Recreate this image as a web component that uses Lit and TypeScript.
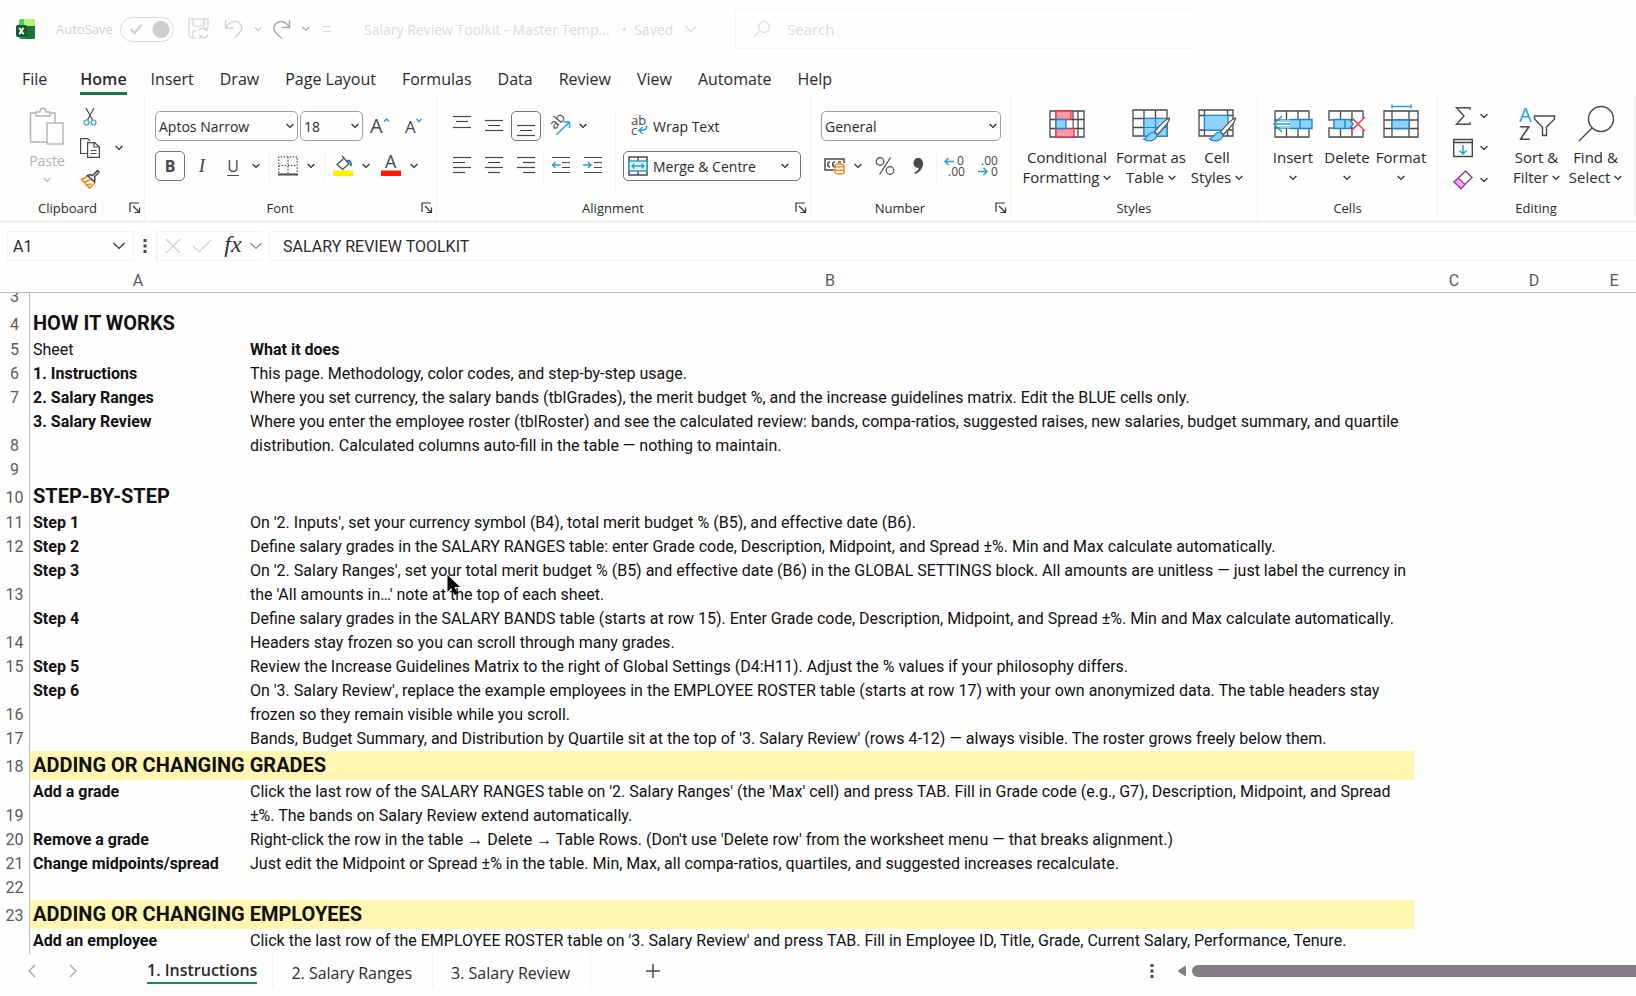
import { LitElement, html, css, svg, nothing } from "lit";
import { customElement, state } from "lit/decorators.js";
import { classMap } from "lit/directives/class-map.js";

interface SheetRow {
  n: number;
  a?: string;
  b?: string;
  kind?: "section" | "band" | "head" | "tallrow";
}

const ROWS: SheetRow[] = [
  { n: 3 },
  { n: 4, a: "HOW IT WORKS", kind: "section" },
  { n: 5, a: "Sheet", b: "What it does", kind: "head" },
  { n: 6, a: "1. Instructions", b: "This page. Methodology, color codes, and step-by-step usage." },
  { n: 7, a: "2. Salary Ranges", b: "Where you set currency, the salary bands (tblGrades), the merit budget %, and the increase guidelines matrix. Edit the BLUE cells only." },
  { n: 8, a: "3. Salary Review", b: "Where you enter the employee roster (tblRoster) and see the calculated review: bands, compa-ratios, suggested raises, new salaries, budget summary, and quartile distribution. Calculated columns auto-fill in the table — nothing to maintain." },
  { n: 9 },
  { n: 10, a: "STEP-BY-STEP", kind: "section" },
  { n: 11, a: "Step 1", b: "On '2. Inputs', set your currency symbol (B4), total merit budget % (B5), and effective date (B6)." },
  { n: 12, a: "Step 2", b: "Define salary grades in the SALARY RANGES table: enter Grade code, Description, Midpoint, and Spread ±%. Min and Max calculate automatically." },
  { n: 13, a: "Step 3", b: "On '2. Salary Ranges', set your total merit budget % (B5) and effective date (B6) in the GLOBAL SETTINGS block. All amounts are unitless — just label the currency in the 'All amounts in…' note at the top of each sheet." },
  { n: 14, a: "Step 4", b: "Define salary grades in the SALARY BANDS table (starts at row 15). Enter Grade code, Description, Midpoint, and Spread ±%. Min and Max calculate automatically. Headers stay frozen so you can scroll through many grades." },
  { n: 15, a: "Step 5", b: "Review the Increase Guidelines Matrix to the right of Global Settings (D4:H11). Adjust the % values if your philosophy differs." },
  { n: 16, a: "Step 6", b: "On '3. Salary Review', replace the example employees in the EMPLOYEE ROSTER table (starts at row 17) with your own anonymized data. The table headers stay frozen so they remain visible while you scroll." },
  { n: 17, b: "Bands, Budget Summary, and Distribution by Quartile sit at the top of '3. Salary Review' (rows 4-12) — always visible. The roster grows freely below them." },
  { n: 18, a: "ADDING OR CHANGING GRADES", kind: "band" },
  { n: 19, a: "Add a grade", b: "Click the last row of the SALARY RANGES table on '2. Salary Ranges' (the 'Max' cell) and press TAB. Fill in Grade code (e.g., G7), Description, Midpoint, and Spread ±%. The bands on Salary Review extend automatically." },
  { n: 20, a: "Remove a grade", b: "Right-click the row in the table → Delete → Table Rows. (Don't use 'Delete row' from the worksheet menu — that breaks alignment.)" },
  { n: 21, a: "Change midpoints/spread", b: "Just edit the Midpoint or Spread ±% in the table. Min, Max, all compa-ratios, quartiles, and suggested increases recalculate." },
  { n: 22 },
  { n: 23, a: "ADDING OR CHANGING EMPLOYEES", kind: "band" },
  { n: 24, a: "Add an employee", b: "Click the last row of the EMPLOYEE ROSTER table on '3. Salary Review' and press TAB. Fill in Employee ID, Title, Grade, Current Salary, Performance, Tenure.", kind: "tallrow" },
];

const icon = (w: number, h: number, body: unknown) =>
  html`<svg width=${w} height=${h} viewBox="0 0 ${w} ${h}" fill="none" stroke="#4a474b" stroke-width="1.2" aria-hidden="true">${body}</svg>`;

const chev = (w = 8) =>
  w > 8
    ? html`<svg class="chev" width="12" height="8" viewBox="0 0 12 8" fill="none" stroke="currentColor" stroke-width="1.1" aria-hidden="true"><path d="M.5 1 6 6.500 11.500 1" /></svg>`
    : html`<svg class="chev" width="8" height="6" viewBox="0 0 8 6" fill="none" stroke="currentColor" stroke-width="1.2" aria-hidden="true"><path d="M.6 1 4 4.400 7.400 1" /></svg>`;

const launcher = icon(12, 12, svg`<path stroke="#333" d="M1 10V1h9M4 4l6 6M10.500 5.500v5h-5" />`);

const excel = html`<svg width="20" height="22" viewBox="0 0 20 22" aria-hidden="true">
  <path fill="#4fd06a" d="M5 1h7v8H3V3a2 2 0 0 1 2-2z" /><path fill="#b8f080" d="M8 1h9a2 2 0 0 1 2 2v6H8z" />
  <path fill="#1f9d4d" d="M3 8h16v11a2 2 0 0 1-2 2H5a2 2 0 0 1-2-2z" /><path fill="#1b7237" d="M10 8h9v11a2 2 0 0 1-2 2h-7z" />
  <rect y="7" width="11" height="12" rx="2" fill="#125c2c" /><path stroke="#fff" stroke-width="1.9" d="M3.2 9.8l4.4 6.4M7.6 9.8l-4.4 6.4" />
</svg>`;

const alignIcon = (lines: number[][]) =>
  icon(20, 20, svg`${lines.map(([x1, x2, y]) => svg`<path d="M${x1} ${y}.5H${x2}" />`)}`);

const I = {
  save: icon(22, 22, svg`<g stroke="#d3d0d4"><path d="M9 20H3.5L1 17.500V1h19v8M5 1v7h11V1M5 20v-7h4M11 13a4.500 4.500 0 0 1 8-1v-3M20 16a4.500 4.500 0 0 1-8 2v3M19 12h-3M12 18h3" /></g>`),
  undo: icon(20, 22, svg`<path stroke="#d3d0d4" stroke-width="1.400" d="M1.500 2v8h8M2 9.500C5 4 11 1.500 15.500 5c4 4 2 8-1 11l-4 4" />`),
  redo: icon(20, 22, svg`<path stroke="#a9a6aa" stroke-width="1.500" d="M17.500 2v7.500H10M17 9C14 3 8 2 4 5.500c-4 4-2 8 1 10.500l5 4.500" />`),
  search: icon(18, 18, svg`<path stroke="#dddadd" d="M6 12l-5 5M16.500 7a5.500 5.500 0 1 1-11 0 5.500 5.500 0 0 1 11 0z" />`),
  paste: icon(36, 40, svg`<g stroke="#b4b1b5" stroke-width="1.400"><path d="M18 35H1.500V6H8M20 6h6v10" /><path d="M7 9V5h4c0-5 6-5 6 0h4v4z" fill="#fff" /><rect x="18" y="16" width="16" height="21" fill="#fff" /></g>`),
  cut: icon(14, 20, svg`<path d="M3 1l6.500 12M11 1L4.500 13" /><circle cx="3.500" cy="15.500" r="2.500" stroke="#2a9fd8" /><circle cx="10.500" cy="15.500" r="2.500" stroke="#2a9fd8" />`),
  copy: icon(20, 20, svg`<path d="M7 15.500H.6V.6h7L10 3M7.600 4.600h7L19.400 9v10.400H7.600zM14 4.600V9h5M10.500 12.500h6M10.500 15.500h6" />`),
  painter: icon(20, 20, svg`<path stroke="#f08a1c" stroke-width="1.600" fill="#fff" d="M8 7L1.500 10.500l8 8.500 5.500-5.500zM4 13.500l7-3M7 16l4-1" /><path stroke-width="1.500" fill="#fff" d="M7.500 6.500l3-1 2 1L17.500 1.500l1.500 1.500-4.500 5 .5 2-.5 2.500z" />`),
  grow: icon(20, 20, svg`<text x="0" y="17" font-size="20" class="g">A</text><path stroke="#2a9fd8" stroke-width="1.500" d="M14 5.500L16.500 3 19 5.500" />`),
  shrink: icon(18, 20, svg`<text x="2" y="17" font-size="17" class="g">A</text><path stroke="#2a9fd8" stroke-width="1.500" d="M13.500 3L16 5.500 18.500 3" />`),
  borders: icon(20, 20, svg`<path stroke-dasharray="1.500 1.500" d="M.8 17V.8h18.400V17M10 1v16M1 9.500h18" /><path stroke-width="2" d="M0 18.500h20" />`),
  fill: icon(20, 22, svg`<path fill="#fff" d="M4 9.500L11 3l5 6-6.500 5.500zM11 3L9 .8" /><path stroke="#1b7fd0" stroke-width="2" d="M14 6c3-1 4 1 4 5" /><path fill="#fff100" stroke="none" d="M0 15.500h20V21H0z" />`),
  color: icon(20, 22, svg`<text x="4" y="13" font-size="18" class="g">A</text><path fill="#ff1a00" stroke="none" d="M0 15.500h20V21H0z" />`),
  top: alignIcon([[1, 19, 0], [4, 16, 5], [1, 19, 11]]),
  middle: alignIcon([[1, 19, 4], [4, 16, 9], [1, 19, 14]]),
  bottom: alignIcon([[1, 19, 9], [4, 16, 14], [1, 19, 19]]),
  left: alignIcon([[1, 19, 1], [1, 13, 6], [1, 19, 11], [1, 13, 16]]),
  center: alignIcon([[1, 19, 1], [4, 16, 6], [1, 19, 11], [4, 16, 16]]),
  right: alignIcon([[1, 19, 1], [7, 19, 6], [1, 19, 11], [7, 19, 16]]),
  outdent: icon(20, 20, svg`<path d="M1 1.500h18M11 6.500h8M11 11.500h8M1 16.500h18" /><path stroke="#2a9fd8" stroke-width="1.500" d="M1.500 9h8M4.500 6l-3 3 3 3" />`),
  indent: icon(20, 20, svg`<path d="M1 1.500h18M11 6.500h8M11 11.500h8M1 16.500h18" /><path stroke="#2a9fd8" stroke-width="1.500" d="M0 9h8M5 6l3 3-3 3" />`),
  orient: icon(22, 22, svg`<text x="0" y="0" font-size="14" class="g" transform="translate(6 15) rotate(-48)">ab</text><path stroke="#2a9fd8" stroke-width="1.500" d="M7.500 19.500L20 7.500M14.500 7H20.500v6" />`),
  wrap: icon(18, 20, svg`<text x="1" y="9" font-size="13" class="g">ab</text><text x="1" y="19" font-size="13" class="g">c</text><path stroke="#2a9fd8" stroke-width="1.500" d="M16.500 9.500c1 4-2 5-7 5M12.500 11l-3.500 3.500 3.500 3.500" />`),
  merge: icon(20, 20, svg`<path stroke-width="1.500" d="M1 1h18v18H1zM10 1v4M10 15v4" /><path fill="#e8f5fd" stroke="#2a9fd8" stroke-width="1.500" d="M1 5h18v10H1z" /><path stroke="#2a9fd8" stroke-width="1.400" d="M4 10h12M6.500 7.500L4 10l2.500 2.500M13.500 7.500L16 10l-2.500 2.500" />`),
  money: icon(22, 20, svg`<path stroke-width="1.500" d="M10 14H1V3h19v4M6 6C3 5.500 3 11 6 11M11 6C8 5.500 8 11 11 11M14 6h3" /><path fill="#fff" stroke="#ef8a1d" stroke-width="1.400" d="M11 9.500c0-2 9-2 9 0v7c0 2-9 2-9 0zM11 9.500c0 2 9 2 9 0M11 13c0 2 9 2 9 0" />`),
  percent: icon(20, 20, svg`<circle cx="5" cy="5.500" r="3.800" /><circle cx="15" cy="14.500" r="3.800" /><path d="M15.500 1.500l-11 17" />`),
  comma: icon(12, 18, svg`<path fill="#4a474b" stroke="none" d="M6 1c3 0 5 2 5 5.500C11 11 8 15 3 17l-.8-1.200C5 14.500 6.500 13 7 10.800 4 11.500 1.500 9 1.500 6 1.500 3 3.500 1 6 1z" />`),
  incDec: icon(22, 22, svg`<path stroke="#2a9fd8" stroke-width="1.500" d="M1 6.500h9M4.500 3L1 6.500 4.500 10" /><text x="13" y="10" font-size="12" class="g">0</text><text x="4" y="21" font-size="12" class="g">.00</text>`),
  decDec: icon(22, 22, svg`<text x="4" y="10" font-size="12" class="g">.00</text><text x="14" y="21" font-size="12" class="g">0</text><path stroke="#2a9fd8" stroke-width="1.500" d="M1 16.500h9M6.500 13l3.500 3.500L6.500 20" />`),
  cond: icon(36, 34, svg`<path stroke-width="1.300" d="M1 4h34v26H1zM1 12.500h34M1 21.500h34M7 4v26M29 4v26M24 4v26" /><path fill="#fff" stroke="none" d="M17.600 13.200h5.700v7.600h-5.700z" /><path fill="#ff9aa6" stroke="#e8323c" stroke-width="1.300" d="M7 4h15v8.500H7zM7 21.500h18V30H7z" /><path fill="#8fd2fb" stroke="#1f86d1" stroke-width="1.300" d="M7 12.500h10v9H7z" />`),
  table: icon(40, 36, svg`<path stroke-width="1.300" d="M2 4h34v26H2zM2 12.500h34M2 21.500h34M13 4v26M24.500 4v26" /><path fill="#8fd2fb" stroke="#1f86d1" d="M13 12.500h23V30H13zM13 21.500h23M24.500 12.500V30" /><path fill="#fff" d="M38.500 12c-4 1-11 9-15 14l3 2.500c5-5 12-12 12-16.500z" /><path fill="#8fd2fb" stroke="#1f86d1" d="M23 26c-5-.5-5 5-10.500 7 5 3.500 12.500 2 13.500-4z" />`),
  cell: icon(40, 36, svg`<path stroke-width="1.300" d="M2 4h34v26H2zM2 9.500h34M2 24h34M7.500 4v26M30.500 4v26" /><path fill="#8fd2fb" stroke="#1f86d1" d="M7.500 9.500h23.500V24H7.500z" /><path fill="#fff" d="M38.500 12c-4 1-11 9-15 14l3 2.500c5-5 12-12 12-16.500z" /><path fill="#8fd2fb" stroke="#1f86d1" d="M23 26c-5-.5-5 5-10.500 7 5 3.500 12.500 2 13.500-4z" />`),
  insert: icon(42, 40, svg`<path stroke-width="1.300" d="M3 7h34v26H3zM3 16h34M3 24h34M14.500 7v9M26 7v9M14.500 24v9M26 24v9" /><path fill="#8fd2fb" stroke="#1f86d1" stroke-width="1.400" d="M17 15.500h23v9H17M28 15.500v9" /><path fill="#8fd2fb" stroke="none" d="M8 15.500h10v9H8z" /><path stroke="#fff" stroke-width="4" d="M2 20h16" /><path stroke="#2a9fd8" stroke-width="1.600" d="M2 20h16M10 12l-8 8 8 8" />`),
  remove: icon(42, 40, svg`<path stroke-width="1.300" d="M3 7h34v26H3zM3 16h34M3 24h34M14.500 7v9M26 7v9M14.500 24v9M26 24v9" /><path fill="#fff" stroke="none" d="M0 16.700h8v6.600H0zM27 14h12v12H27z" /><path fill="#8fd2fb" stroke="#1f86d1" stroke-width="1.400" d="M8 15.500h16l3 4.500-3 4.500H8zM19 15.500v9" /><path stroke="#e8454c" stroke-width="1.600" d="M25 13l14 14M39 13L25 27" />`),
  format: icon(42, 40, svg`<path stroke-width="1.300" d="M4 7h34v26H4zM4 16h34M4 24.500h34M12 7v26M29 7v26" /><path fill="#8fd2fb" stroke="#1f86d1" stroke-width="1.400" d="M12 16h17v8.500H12z" /><path stroke="#2a9fd8" stroke-width="1.400" d="M12 2.500h19M12 .5v4M31 .5v4" />`),
  sum: icon(20, 20, svg`<path stroke-width="1.400" d="M17 4V1.800H3.500L11 10l-7.500 8.200H17V16" />`),
  down: icon(20, 20, svg`<path stroke-width="1.400" d="M.7 1.500h18.600v17H.7zM.7 4.500h18.600" /><path stroke="#2a9fd8" stroke-width="1.500" d="M10 7v9M6.500 12.500L10 16l3.500-3.500" />`),
  erase: icon(20, 20, svg`<path fill="#fff" d="M12.500 1L19 7.500 8 18.500 1 12z" /><path fill="#f3a8f2" stroke="#a347a8" stroke-width="1.300" d="M5.500 8L12 14.500 8 18.500 1 12z" /><path stroke="#a347a8" stroke-width="1" d="M12.500 1L19 7.500 8 18.500 1 12z" />`),
  sort: icon(36, 36, svg`<text x="0" y="16" font-size="20" class="b">A</text><text x="0" y="34" font-size="20" class="g">Z</text><path stroke-width="1.400" d="M15.500 10h20v3l-8 8v8.500h-4V21l-8-8z" />`),
  find: icon(38, 38, svg`<circle cx="24" cy="14" r="12.500" stroke-width="1.400" /><path stroke-width="1.400" d="M15 23L2 36" />`),
};

@customElement("ribbon-group")
class RibbonGroup extends LitElement {
  static properties = { label: {}, launch: { type: Boolean } };
  declare label: string;
  declare launch: boolean;
  static styles = css`
    :host { display: flex; flex-direction: column; box-sizing: border-box; flex: none; border-right: 1px solid #f3f0f4; }
    .body { flex: 1; display: flex; align-items: flex-start; }
    footer { display: flex; align-items: center; height: 24px; padding-left: var(--label-inset, 0); font-size: 13px; text-align: center; color: #2b292c; }
    .title { flex: 1; }
    button { all: unset; display: flex; width: 15px; padding-left: 6px; }
  `;
  render() {
    return html`<div class="body"><slot></slot></div>
      <footer><span class="title">${this.label}</span>${this.launch ? html`<button aria-label="${this.label} settings">${launcher}</button>` : nothing}</footer>`;
  }
}

@customElement("app-root")
class AppRoot extends LitElement {
  @state() tab = "Home";
  @state() sheet = 0;

  static styles = css`
    :host { display: flex; flex-direction: column; height: 100vh; overflow: hidden; position: relative; background: #fefefe; color: #2b292c; font-family: "Open Sans", "Noto Sans", sans-serif; font-size: 14px; }
    * { box-sizing: border-box; }
    button, select, input { font: inherit; color: inherit; background: none; border: 0; padding: 0; margin: 0; }
    button { display: flex; align-items: center; justify-content: center; }
    svg { display: block; flex: none; overflow: visible; }
    .g { fill: #4a474b; stroke: none; }
    .b { fill: #2a9fd8; stroke: none; }

    .titlebar { display: flex; align-items: center; height: 58px; padding-left: 16px; color: #d3d0d4; font-size: 13px; }
    .titlebar .auto { margin-left: 20px; width: 64px; }
    .toggle { appearance: none; width: 54px; height: 25px; border: 1px solid #dddadd; border-radius: 13px; background: radial-gradient(circle at 40px 50%, #d0cdd1 8px, transparent 9px); }
    .togglebox { display: grid; align-items: center; }
    .togglebox > * { grid-area: 1 / 1; }
    .togglebox svg { margin-left: 9px; }
    .quick { display: flex; align-items: center; gap: 10px; margin-left: 14px; width: 162px; }
    .quick .undo { margin-left: 4px; }
    .doc { margin-left: 14px; width: 371px; display: flex; align-items: center; gap: 12px; font-size: 14px; color: #dddadd; white-space: pre; }
    .redo { color: #a9a6aa; }
    .search { display: flex; align-items: center; gap: 16px; flex: 0 1 456px; height: 40px; padding-left: 17px; border: 1px solid #f6f4f6; border-width: 1px 0 1px 1px; font-size: 15px; }
    .search input { min-width: 0; flex: 1; outline: 0; }
    .search input::placeholder { color: #dddadd; opacity: 1; }

    .tabs { display: flex; height: 38px; padding-left: 9px; font-size: 16px; }
    .tabs button { align-items: flex-start; height: 37px; padding: 0 13px; }
    .tabs span { display: block; padding-top: 8px; height: 37px; line-height: 26px; border-bottom: 3px solid transparent; }
    .tabs .on { padding: 0 11px 0 20px; }
    .tabs .on span { font-weight: 600; border-color: #1b7a43; }

    .ribbon { display: flex; height: 126px; padding-bottom: 1px; border-bottom: 1px solid #ebe8ec; }
    .stack { display: flex; flex-direction: column; gap: 10px; padding-top: 15px; }
    .row { display: flex; align-items: center; gap: 2px; height: 30px; }
    .ib { width: 30px; height: 30px; }
    .split { display: flex; align-items: center; height: 30px; }
    .split button { width: 28px; height: 30px; }
    .split button + button { width: 18px; }
    .boxed { border: 1px solid #77747a; border-radius: 5px; }
    .sep { width: 1px; height: 32px; background: #f3f0f4; }
    .wide .sep { margin: 0 2px; }
    .loose { gap: 3px; }
    .bold { font-weight: 700; font-size: 16px; color: #4a474b; }
    .ital { font-family: "Liberation Serif", serif; font-style: italic; font-size: 19px; color: #4a474b; }
    .under { text-decoration: underline; text-underline-offset: 3px; font-size: 16px; color: #4a474b; }

    .pick { display: grid; align-items: center; height: 30px; border: 1px solid #a19ea3; border-radius: 5px; }
    .pick > * { grid-area: 1 / 1; }
    .pick select { appearance: none; height: 28px; padding-left: 3px; font-size: 14px; outline: 0; }
    .pick svg { justify-self: end; margin-right: 3px; pointer-events: none; }
    .font { width: 143px; }
    .size { width: 63px; }
    .num { width: 180px; }

    .clip { width: 145px; --label-inset: 12px; }
    .clipin { display: flex; padding: 11px 0 0 25px; gap: 11px; }
    .paste { flex-direction: column; color: #b4b1b5; width: 44px; font-size: 14px; justify-content: flex-start; }
    .paste span { line-height: 20px; padding: 4px 0 6px; }
    .cliprow { display: flex; flex-direction: column; gap: 11px; }
    .cliprow div { display: flex; align-items: center; gap: 14px; height: 20px; }
    .cliprow button { width: 20px; }
    .cliprow button + button { width: 10px; }
    .fontg { width: 292px; }
    .aln { width: 374px; }
    .numg { width: 200px; }
    .sty { width: 247px; }
    .cel { width: 180px; }
    .edi { width: 197px; }
    .pad { padding-left: 10px; }
    .aln .stack + .tall + .stack { padding-left: 7px; }
    .tall { width: 1px; height: 80px; margin: 14px 0 0 7px; background: #f3f0f4; }
    .wraptext { gap: 5px; padding-left: 7px; height: 30px; }
    .mergebtn { width: 178px; height: 30px; padding: 0 11px 0 4px; gap: 5px; }
    .mergebtn .txt { flex: 1; text-align: left; }

    .big { display: flex; padding: 7px 0 0 7px; }
    .big button { flex-direction: column; justify-content: flex-start; font-size: 15px; line-height: 20px; }
    .big .pic { display: flex; align-items: center; height: 44px; padding-bottom: 2px; }
    .big .chev { display: inline-block; vertical-align: 2px; }
    .b1 { width: 98px; }
    .b2 { width: 70px; }
    .b3 { width: 62px; }
    .b4 { width: 54px; }
    .b5 { width: 59px; }
    .b4 .chev { margin-top: 8px; }
    .cells { padding-left: 8px; }
    .trio { display: flex; flex-direction: column; gap: 2px; padding: 5px 16px 0 11px; }
    .trio .split button + button { width: 14px; }
    .finders { padding-left: 0; }

    .fbar { display: flex; align-items: center; height: 48px; padding: 0 0 0 7px; font-size: 15px; }
    .fbar > * { height: 30px; border: solid #f5f2f6; border-width: 1px 0 1px 1px; }
    .namebox { display: flex; align-items: center; width: 126px; padding: 0 7px 0 5px; }
    .namebox input { width: 100px; font-family: Roboto, sans-serif; font-size: 16px; }
    .fbar .dots { width: 24px; border-width: 0 1px; }
    .fxs { display: flex; align-items: center; width: 106px; color: #8a878b; }
    .fxs button { width: 29px; }
    .fxs .fx { font-family: "Liberation Serif", serif; font-style: italic; font-size: 24px; color: #333; width: 34px; padding-bottom: 4px; }
    .fxs .more { width: 12px; }
    .formula { flex: 1; min-width: 0; margin-left: 6px; }
    .formula input { width: 100%; height: 28px; padding-left: 13px; font-family: Roboto, sans-serif; font-size: 16px; outline: 0; }

    .grid { table-layout: fixed; border-collapse: separate; border-spacing: 0; width: calc(100% + 18px); font-family: Roboto, "Open Sans", sans-serif; }
    .c0 { width: 30px; }
    .ca { width: 216px; }
    .cn { width: 80px; }
    .heads th { height: 22px; padding: 0; font: 400 16px/22px Roboto, sans-serif; color: #5c595e; }
    .headwrap { flex: none; overflow: hidden; border-bottom: 1px solid #bcb9be; }
    .pane { flex: 1; min-height: 0; overflow: hidden; }
    .pane .grid { margin-top: -8px; }
    .pane tr { height: 24px; }
    .pane th { padding: 0; font: 400 16px/24px Roboto, sans-serif; color: #5c595e; vertical-align: bottom; text-align: center; border-right: 1px solid #bcb9be; white-space: nowrap; }
    .pane td { padding: 0 4px; font-size: 16px; line-height: 24px; color: #111; vertical-align: top; }
    .pane td.a { padding-left: 3px; font-weight: 700; white-space: nowrap; }
    .pane .head td.a { font-weight: 400; }
    .pane .head td.b { font-weight: 700; }
    .pane tr.section, .pane tr.band { height: 29px; }
    .pane tr.tallrow { height: 48px; }
    .pane .section td, .pane .band td { font-size: 20px; line-height: 29px; font-weight: 700; }
    .pane .section th, .pane .band th { line-height: 26px; }
    .pane .band td.a { background: #fff7b2; }
    .keep { white-space: nowrap; }

    .sheets { display: flex; align-items: center; height: 42px; flex: none; font-size: 16px; padding: 0 0 8px 27px; }
    .sheets .nav { width: 41px; justify-content: flex-start; color: #aaa7ab; }
    .sheets .tab { height: 34px; padding: 3px 20px 0 18px; border-right: 1px solid #f3f0f4; }
    .sheets .tab.on { padding: 0 15px 0 38px; }
    .sheets .on span { font-weight: 600; border-bottom: 2px solid #1c8a4c; line-height: 24px; }
    .sheets .add { width: 124px; }
    .sheets .spring { flex: 1; }
    .hbar { display: flex; align-items: center; gap: 6px; width: 486px; }
    .hbar .arrow { margin-left: 18px; }
    .hbar .thumb { flex: 1; height: 12px; border-radius: 6px 0 0 6px; background: #837e86; }
    .cursor { position: absolute; left: 447px; top: 575px; }
  `;

  private split(i: unknown, label: string) {
    return html`<div class="split"><button aria-label=${label}>${i}</button><button aria-label="${label} options">${chev()}</button></div>`;
  }
  private ib(i: unknown, label: string, cls = "") {
    return html`<button class="ib ${cls}" aria-label=${label}>${i}</button>`;
  }
  private pick(cls: string, label: string, value: string) {
    return html`<label class="pick ${cls}"><select aria-label=${label}><option>${value}</option></select>${chev()}</label>`;
  }

  private titlebar() {
    return html`<header class="titlebar">
      ${excel}<label class="auto" for="auto">AutoSave</label>
      <span class="togglebox"><input id="auto" class="toggle" type="checkbox" checked />
        ${icon(14, 12, svg`<path stroke="#d0cdd1" stroke-width="2" d="M1.500 6l4 4 7-8" />`)}</span>
      <div class="quick">
        <button aria-label="Save">${I.save}</button><button class="undo" aria-label="Undo">${I.undo}</button><button aria-label="Undo options">${chev()}</button>
        <button class="redo" aria-label="Redo">${I.redo}</button><button class="redo" aria-label="Redo options">${chev()}</button>
        <button aria-label="Customise toolbar">${icon(14, 10, svg`<path stroke="#dddadd" d="M3 2.500h8M3 7.500h8" />`)}</button>
      </div>
      <div class="doc"><span>Salary Review Toolkit - Master Temp...</span><span>•  Saved</span>${chev(12)}</div>
      <label class="search">${I.search}<input type="search" aria-label="Search" placeholder="Search" /></label>
    </header>`;
  }

  private ribbon() {
    const tabs = ["File", "Home", "Insert", "Draw", "Page Layout", "Formulas", "Data", "Review", "View", "Automate", "Help"];
    return html`<nav class="tabs">
        ${tabs.map((t) => html`<button class=${classMap({ on: t === this.tab })} @click=${() => (this.tab = t)}><span>${t}</span></button>`)}
      </nav>
      <section class="ribbon">
        <ribbon-group class="clip" label="Clipboard" launch>
          <div class="clipin">
            <button class="paste">${I.paste}<span>Paste</span>${chev()}</button>
            <div class="cliprow">
              <div><button aria-label="Cut">${I.cut}</button></div>
              <div><button aria-label="Copy">${I.copy}</button><button aria-label="Copy options">${chev()}</button></div>
              <div><button aria-label="Format painter">${I.painter}</button></div>
            </div>
          </div>
        </ribbon-group>
        <ribbon-group class="fontg" label="Font" launch>
          <div class="stack pad">
            <div class="row">${this.pick("font", "Font", "Aptos Narrow")}${this.pick("size", "Font size", "18")}${this.ib(I.grow, "Grow font")}${this.ib(I.shrink, "Shrink font")}</div>
            <div class="row wide">
              <button class="ib boxed bold">B</button><button class="ib ital">I</button>
              ${this.split(html`<span class="under">U</span>`, "Underline")}<i class="sep"></i>
              ${this.split(I.borders, "Borders")}<i class="sep"></i>${this.split(I.fill, "Fill colour")}${this.split(I.color, "Font colour")}
            </div>
          </div>
        </ribbon-group>
        <ribbon-group class="aln" label="Alignment" launch>
          <div class="stack pad">
            <div class="row">${this.ib(I.top, "Top align")}${this.ib(I.middle, "Middle align")}${this.ib(I.bottom, "Bottom align", "boxed")}<i class="sep"></i>${this.split(I.orient, "Orientation")}</div>
            <div class="row">${this.ib(I.left, "Align left")}${this.ib(I.center, "Centre")}${this.ib(I.right, "Align right")}<i class="sep"></i>${this.ib(I.outdent, "Decrease indent")}${this.ib(I.indent, "Increase indent")}</div>
          </div>
          <i class="tall"></i>
          <div class="stack">
            <div class="row"><button class="wraptext">${I.wrap}<span>Wrap Text</span></button></div>
            <div class="row"><button class="mergebtn boxed">${I.merge}<span class="txt">Merge &amp; Centre</span>${chev()}</button></div>
          </div>
        </ribbon-group>
        <ribbon-group class="numg" label="Number" launch>
          <div class="stack pad">
            <div class="row">${this.pick("num", "Number format", "General")}</div>
            <div class="row loose">${this.split(I.money, "Accounting format")}${this.ib(I.percent, "Percent")}${this.ib(I.comma, "Comma style")}<i class="sep"></i>${this.ib(I.incDec, "Increase decimal")}${this.ib(I.decDec, "Decrease decimal")}</div>
          </div>
        </ribbon-group>
        <ribbon-group class="sty" label="Styles">
          <div class="big">
            <button class="b1"><span class="pic">${I.cond}</span><span>Conditional<br />Formatting ${chev()}</span></button>
            <button class="b2"><span class="pic">${I.table}</span><span>Format as<br />Table ${chev()}</span></button>
            <button class="b3"><span class="pic">${I.cell}</span><span>Cell<br />Styles ${chev()}</span></button>
          </div>
        </ribbon-group>
        <ribbon-group class="cel" label="Cells">
          <div class="big cells">
            <button class="b4"><span class="pic">${I.insert}</span><span>Insert</span>${chev()}</button>
            <button class="b4"><span class="pic">${I.remove}</span><span>Delete</span>${chev()}</button>
            <button class="b4"><span class="pic">${I.format}</span><span>Format</span>${chev()}</button>
          </div>
        </ribbon-group>
        <ribbon-group class="edi" label="Editing">
          <div class="trio">${this.split(I.sum, "AutoSum")}${this.split(I.down, "Fill")}${this.split(I.erase, "Clear")}</div>
          <div class="big finders">
            <button class="b5"><span class="pic">${I.sort}</span><span>Sort &amp;<br />Filter ${chev()}</span></button>
            <button class="b5"><span class="pic">${I.find}</span><span>Find &amp;<br />Select ${chev()}</span></button>
          </div>
        </ribbon-group>
      </section>`;
  }

  private formulaBar() {
    return html`<div class="fbar">
      <div class="namebox"><input aria-label="Name box" value="A1" /><button aria-label="Name list">${chev(12)}</button></div>
      <button class="dots" aria-label="Resize">${icon(4, 16, svg`<path fill="#4a474b" stroke="none" d="M.5 1h3v3h-3zM.5 6.500h3v3h-3zM.5 12h3v3h-3z" />`)}</button>
      <div class="fxs">
        <button aria-label="Cancel">${icon(16, 16, svg`<path stroke="#d3d0d4" d="M1 1l14 14M15 1L1 15" />`)}</button>
        <button aria-label="Enter">${icon(20, 14, svg`<path stroke="#d3d0d4" d="M1 7l6 6L19 1" />`)}</button>
        <button class="fx" aria-label="Insert function">fx</button><button class="more" aria-label="Function list">${chev(12)}</button>
      </div>
      <div class="formula"><input aria-label="Formula" value="SALARY REVIEW TOOLKIT" /></div>
    </div>`;
  }

  private cols() {
    return html`<colgroup><col class="c0" /><col class="ca" /><col /><col class="cn" /><col class="cn" /><col class="cn" /></colgroup>`;
  }

  private text(s = "") {
    return s.split(/(±%\.?)/).map((p) => (p.startsWith("±") ? html`<span class="keep">${p}</span>` : p));
  }

  private row(r: SheetRow) {
    const wide = r.kind === "section" || r.kind === "band";
    return html`<tr class=${r.kind ?? ""}>
      <th scope="row">${r.n}</th>
      <td class="a" colspan=${wide ? 2 : 1}>${r.a ?? ""}</td>
      ${wide ? nothing : html`<td class="b">${this.text(r.b)}</td>`}<td></td><td></td><td></td>
    </tr>`;
  }

  render() {
    const sheets = ["1. Instructions", "2. Salary Ranges", "3. Salary Review"];
    return html`${this.titlebar()}${this.ribbon()}${this.formulaBar()}
      <div class="headwrap"><table class="grid heads">${this.cols()}
        <thead><tr><th></th>${["A", "B", "C", "D", "E"].map((c) => html`<th scope="col">${c}</th>`)}</tr></thead></table></div>
      <main class="pane"><table class="grid">${this.cols()}<tbody>${ROWS.map((r) => this.row(r))}</tbody></table></main>
      <footer class="sheets">
        <button class="nav" aria-label="Previous sheet">${icon(10, 14, svg`<path stroke="currentColor" stroke-width="1.400" d="M8 1L2 7l6 6" />`)}</button>
        <button class="nav" aria-label="Next sheet">${icon(10, 14, svg`<path stroke="currentColor" stroke-width="1.400" d="M2 1l6 6-6 6" />`)}</button>
        ${sheets.map((s, i) => html`<button class=${classMap({ tab: true, on: i === this.sheet })} @click=${() => (this.sheet = i)}><span>${s}</span></button>`)}
        <button class="add" aria-label="New sheet">${icon(16, 16, svg`<path stroke-width="1.500" d="M8 1v14M1 8h14" />`)}</button>
        <span class="spring"></span>
        <div class="hbar">${icon(4, 16, svg`<path fill="#4a474b" stroke="none" d="M.5 1h3v3h-3zM.5 6.500h3v3h-3zM.5 12h3v3h-3z" />`)}
          <button class="arrow" aria-label="Scroll left">${icon(8, 12, svg`<path fill="#837e86" stroke="none" d="M8 .5v11L.5 7V5z" />`)}</button><span class="thumb"></span></div>
      </footer>
      <svg class="cursor" width="14" height="21" viewBox="0 0 14 21" aria-hidden="true"><path fill="#000" d="M.5 0v17l4-4 3 7 3-1.500-3-6.500h5.500z" /></svg>`;
  }
}
